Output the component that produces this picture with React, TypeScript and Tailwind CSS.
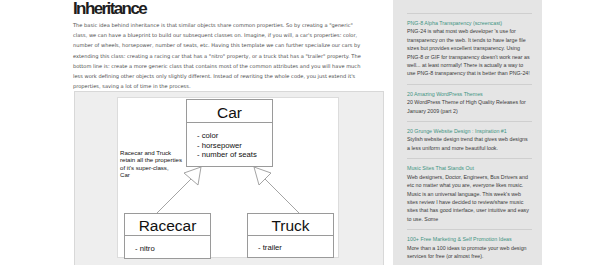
import React from "react";

const para = [
  'The basic idea behind inheritance is that similar objects share common properties. So by creating a "generic"',
  "class, we can have a blueprint to build our subsequent classes on. Imagine, if you will, a car's properties: color,",
  "number of wheels, horsepower, number of seats, etc. Having this template we can further specialize our cars by",
  'extending this class: creating a racing car that has a "nitro" property, or a truck that has a "trailer" property. The',
  "bottom line is: create a more generic class that contains most of the common attributes and you will have much",
  "less work defining other objects only slightly different. Instead of rewriting the whole code, you just extend it's",
  "properties, saving a lot of time in the process.",
];

const items: { title: string; body: string[] }[] = [
  {
    title: "PNG-8 Alpha Transparency (screencast)",
    body: [
      "PNG-24 is what most web developer 's use for",
      "transparency on the web. It tends to have large file",
      "sizes but provides excellent transparency. Using",
      "PNG-8 or GIF for transparency doesn't work near as",
      "well... at least normally! There is actually a way to",
      "use PNG-8 transparency that is better than PNG-24!",
    ],
  },
  {
    title: "20 Amazing WordPress Themes",
    body: ["20 WordPress Theme of High Quality Releases for", "January 2009 (part 2)"],
  },
  {
    title: "20 Grunge Website Design : Inspiration #1",
    body: ["Stylish website design trend that gives web designs", "a less uniform and more beautiful look."],
  },
  {
    title: "Music Sites That Stands Out",
    body: [
      "Web designers, Doctor, Engineers, Bus Drivers and",
      "etc no matter what you are, everyone likes music.",
      "Music is an universal language. This week's web",
      "sites review I have decided to review/share music",
      "sites that has good interface, user intuitive and easy",
      "to use. Some",
    ],
  },
  {
    title: "100+ Free Marketing & Self Promotion Ideas",
    body: ["More than a 100 ideas to promote your web design", "services for free (or almost free)."],
  },
];

function Diagram() {
  const f = "'Liberation Sans', Arial, sans-serif";
  return (
    <svg width="222" height="161" viewBox="0 0 222 161" className="block">
      <g fill="white" stroke="#9a9a9a" strokeWidth="1">
        <rect x="68.5" y="1.5" width="86" height="67" />
        <line x1="68.5" y1="24.5" x2="154.5" y2="24.5" />
        <rect x="6.5" y="115.5" width="86" height="45" />
        <line x1="6.5" y1="137.5" x2="92.5" y2="137.5" />
        <rect x="129.5" y="115.5" width="86" height="44" />
        <line x1="129.5" y1="137.5" x2="215.5" y2="137.5" />
      </g>
      <g fill="none" stroke="#9a9a9a" strokeWidth="0.9">
        <polygon points="83,69 66,75 80,87" />
        <line x1="73" y1="81" x2="39" y2="115" />
        <polygon points="136,69 153,75 141,87" />
        <line x1="147" y1="81" x2="181" y2="115" />
      </g>
      <g fontFamily={f} fill="#111">
        <text x="111.5" y="20" fontSize="15.5" textAnchor="middle">Car</text>
        <text x="49.5" y="133" fontSize="15.5" textAnchor="middle">Racecar</text>
        <text x="172.5" y="133" fontSize="15.5" textAnchor="middle">Truck</text>
        <text x="79" y="40" fontSize="7.7">- color</text>
        <text x="79" y="49.5" fontSize="7.7">- horsepower</text>
        <text x="79" y="59" fontSize="7.7">- number of seats</text>
        <text x="17" y="153" fontSize="7.7">- nitro</text>
        <text x="140" y="152" fontSize="7.7">- trailer</text>
        <text x="2" y="57" fontSize="6.1">Racecar and Truck</text>
        <text x="2" y="64.3" fontSize="6.1">retain all the properties</text>
        <text x="2" y="71.6" fontSize="6.1">of it's super-class,</text>
        <text x="2" y="78.9" fontSize="6.1">Car</text>
      </g>
    </svg>
  );
}

export default function App() {
  return (
    <div className="w-[600px] h-[265px] overflow-hidden bg-white flex">
      <div className="ml-[73px] w-[320px] shrink-0">
        <h1 className="text-[17px] leading-[17px] font-bold text-[#1e1e1e] tracking-[-1.6px] font-['Liberation_Sans',Arial,sans-serif]">
          Inheritance
        </h1>
        <div className="mt-[3px] text-[5.1px] leading-[10.2px] text-[#4a4a4a] font-['DejaVu_Sans',Verdana,sans-serif]">
          {para.map((l, i) => (
            <div key={i} className="whitespace-nowrap">
              {l}
            </div>
          ))}
        </div>
        <div className="ml-[1px] w-[310px] h-[180px] border border-[#d8d8d8] bg-[#eeeeee] pl-[42px] pt-[5px]">
          <div className="w-[222px] h-[161px] border border-[#dcdcdc] bg-white">
            <Diagram />
          </div>
        </div>
      </div>
      <div className="w-[149px] shrink-0 bg-[#e5e5e5] pt-[13px] pl-[14px] pr-[10px] font-['Liberation_Sans',Arial,sans-serif] text-[5.3px] leading-[8.4px]">
        {items.map((it, i) => (
          <div key={i} className="border-t border-[#cfcfcf] pt-[5px] pb-[6px]">
            <div className="whitespace-nowrap text-[#3f9483]">{it.title}</div>
            {it.body.map((b, j) => (
              <div key={j} className="whitespace-nowrap text-[#3a3a3a]">
                {b}
              </div>
            ))}
          </div>
        ))}
      </div>
    </div>
  );
}
